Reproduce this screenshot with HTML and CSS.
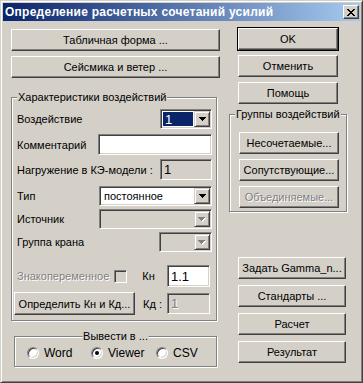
FILE: index.html
```html
<!DOCTYPE html>
<html>
<head>
<meta charset="utf-8">
<link rel="stylesheet" href="styles.css">
</head>
<body>
<div class="window">
  <div class="titlebar">
    <span class="title">Определение расчетных сочетаний усилий</span>
    <div class="close">
      <svg width="8" height="7" viewBox="0 0 8 7" shape-rendering="crispEdges">
        <path d="M0 0h2v1h-2zM6 0h2v1h-2zM1 1h2v1h-2zM5 1h2v1h-2zM2 2h4v1h-4zM3 3h2v1h-2zM2 4h4v1h-4zM1 5h2v1h-2zM5 5h2v1h-2zM0 6h2v1h-2zM6 6h2v1h-2z" fill="#000"/>
      </svg>
    </div>
  </div>
  <div class="client">
    <div class="left">
      <div class="btn wide b-table">Табличная форма ...</div>
      <div class="btn wide b-seism">Сейсмика и ветер ...</div>

      <div class="group chars">
        <span class="gtitle">Характеристики воздействий</span>
        <div class="row r1">
          <span class="lbl">Воздействие</span>
          <div class="field combo w52 h20">
            <span class="val selected">1</span>
            <span class="arrow"><svg width="7" height="4" shape-rendering="crispEdges"><path d="M0 0h7v1h-7zM1 1h5v1h-5zM2 2h3v1h-3zM3 3h1v1h-1z" fill="#000"/></svg></span>
          </div>
        </div>
        <div class="row r2">
          <span class="lbl">Комментарий</span>
          <div class="field edit w114 h21"></div>
        </div>
        <div class="row r3">
          <span class="lbl">Нагружение в КЭ-модели :</span>
          <div class="field ro w52 h21"><span class="txt">1</span></div>
        </div>
        <div class="row r4">
          <span class="lbl">Тип</span>
          <div class="field combo w113 h20">
            <span class="val">постоянное</span>
            <span class="arrow"><svg width="7" height="4" shape-rendering="crispEdges"><path d="M0 0h7v1h-7zM1 1h5v1h-5zM2 2h3v1h-3zM3 3h1v1h-1z" fill="#000"/></svg></span>
          </div>
        </div>
        <div class="row r5">
          <span class="lbl">Источник</span>
          <div class="field combo disabled w113 h20">
            <span class="val"></span>
            <span class="arrow"><svg width="8" height="5" shape-rendering="crispEdges"><path d="M1 1h7v1h-7zM2 2h5v1h-5zM3 3h3v1h-3zM4 4h1v1h-1z" fill="#fff"/><path d="M0 0h7v1h-7zM1 1h5v1h-5zM2 2h3v1h-3zM3 3h1v1h-1z" fill="#808080"/></svg></span>
          </div>
        </div>
        <div class="row r6">
          <span class="lbl">Группа крана</span>
          <div class="field combo disabled w53 h20">
            <span class="val"></span>
            <span class="arrow"><svg width="8" height="5" shape-rendering="crispEdges"><path d="M1 1h7v1h-7zM2 2h5v1h-5zM3 3h3v1h-3zM4 4h1v1h-1z" fill="#fff"/><path d="M0 0h7v1h-7zM1 1h5v1h-5zM2 2h3v1h-3zM3 3h1v1h-1z" fill="#808080"/></svg></span>
          </div>
        </div>
        <div class="row r7">
          <span class="lbl dis">Знакопеременное</span>
          <span class="check"></span>
          <span class="lbl kn">Кн</span>
          <div class="field edit w43 h22"><span class="txt">1.1</span></div>
        </div>
        <div class="row r8">
          <div class="btn b-kd">Определить Кн и Кд...</div>
          <span class="lbl kd">Кд :</span>
          <div class="field ro w43 h21"><span class="txt dis">1</span></div>
        </div>
      </div>

      <div class="group output">
        <span class="gtitle centered">Вывести в ...</span>
        <div class="radios">
          <span class="ritem w64"><span class="radio"></span><span class="rlbl">Word</span></span>
          <span class="ritem w65"><span class="radio on"></span><span class="rlbl">Viewer</span></span>
          <span class="ritem"><span class="radio"></span><span class="rlbl">CSV</span></span>
        </div>
      </div>
    </div>

    <div class="right">
      <div class="btn narrow default b-ok">OK</div>
      <div class="btn narrow b-cancel">Отменить</div>
      <div class="btn narrow b-help">Помощь</div>
      <div class="group groups">
        <span class="gtitle">Группы воздействий</span>
        <div class="btn narrow g1">Несочетаемые...</div>
        <div class="btn narrow g2">Сопутствующие...</div>
        <div class="btn narrow g3 dis">Объединяемые...</div>
      </div>
      <div class="btn broad b-gamma">Задать Gamma_n...</div>
      <div class="btn broad b-std">Стандарты ...</div>
      <div class="btn broad b-calc">Расчет</div>
      <div class="btn broad b-res">Результат</div>
    </div>
  </div>
</div>
</body>
</html>
```

FILE: styles.css
```css
* { box-sizing: border-box; }
html, body { margin: 0; padding: 0; }
body {
  width: 363px;
  height: 383px;
  overflow: hidden;
  background: #D4D0C8;
  font-family: "Liberation Sans", Arial, sans-serif;
  font-size: 11px;
  color: #000;
}
.window {
  width: 363px;
  height: 383px;
  background: #D4D0C8;
  border: 1px solid;
  border-color: #D4D0C8 #404040 #404040 #D4D0C8;
  box-shadow: inset 1px 1px 0 #fff, inset -1px -1px 0 #808080;
  padding: 2px;
  display: flex;
  flex-direction: column;
}
.titlebar {
  height: 18px;
  flex: none;
  display: flex;
  align-items: center;
  justify-content: space-between;
  padding-left: 2px;
  padding-right: 1px;
  background: linear-gradient(to right, #0A246A, #A6CAF0);
}
.title {
  color: #fff;
  font-weight: bold;
  font-size: 12px;
  letter-spacing: 0.25px;
  white-space: nowrap;
}
.close {
  width: 16px;
  height: 14px;
  background: #D4D0C8;
  border: 1px solid;
  border-color: #fff #404040 #404040 #fff;
  box-shadow: inset -1px -1px 0 #808080;
  display: flex;
  align-items: center;
  justify-content: center;
  padding-right: 1px;
}
.close svg { display: block; }

.client {
  flex: 1;
  display: flex;
}
.left {
  width: 217px;
  margin-left: 8px;
  display: flex;
  flex-direction: column;
}
.right {
  width: 119px;
  margin-left: 1px;
  display: flex;
  flex-direction: column;
}

/* buttons */
.btn {
  height: 22px;
  background: #D4D0C8;
  border: 1px solid;
  border-color: #fff #404040 #404040 #fff;
  box-shadow: inset -1px -1px 0 #808080;
  display: flex;
  align-items: center;
  justify-content: center;
  white-space: nowrap;
  flex: none;
}
.btn.dis { color: #808080; text-shadow: 1px 1px 0 #fff; }
.btn.wide { width: 209px; }
.b-table { margin-top: 8px; }
.b-seism { margin-top: 5px; }
.btn.narrow { width: 100px; margin-left: 9px; }
.btn.broad { width: 108px; margin-left: 9px; }
.btn.default { outline: 1px solid #000; }
.b-ok { margin-top: 7px; }
.b-cancel { margin-top: 5px; }
.b-help { margin-top: 5px; }
.g1 { margin-top: 17px; margin-left: 8px; }
.g2 { margin-top: 5px; margin-left: 8px; }
.g3 { margin-top: 5px; margin-left: 8px; }
.b-gamma { margin-top: 45px; }
.b-std { margin-top: 6px; }
.b-calc { margin-top: 6px; }
.b-res { margin-top: 6px; }

/* group boxes */
.group {
  position: relative;
  border: 1px solid #808080;
  box-shadow: inset 1px 1px 0 #fff, 1px 1px 0 #fff;
  flex: none;
}
.gtitle {
  position: absolute;
  top: -8px;
  left: 5px;
  padding: 0 1px;
  background: #D4D0C8;
  line-height: 14px;
  white-space: nowrap;
}
.gtitle.centered {
  left: 50%;
  transform: translateX(-50%);
}
.chars {
  margin-top: 19px;
  width: 206px;
  height: 224px;
  padding: 11px 4px 0 5px;
  display: flex;
  flex-direction: column;
}
.groups {
  margin-top: 10px;
  width: 118px;
  height: 98px;
  display: flex;
  flex-direction: column;
}
.output {
  margin-top: 15px;
  margin-left: 3px;
  width: 203px;
  height: 31px;
}

/* rows */
.row {
  display: flex;
  align-items: center;
  flex: none;
}
.lbl { white-space: nowrap; }
.lbl.dis { color: #808080; text-shadow: 1px 1px 0 #fff; }
.row .field { margin-left: auto; }
.r2 { margin-top: 5px; }
.r3 { margin-top: 4px; }
.r4 { margin-top: 6px; }
.r5 { margin-top: 3px; }
.r6 { margin-top: 3px; }
.r7 { margin-top: 13px; padding-right: 2px; }
.r8 { margin-top: 5px; padding-right: 2px; margin-left: -3px; }

/* fields */
.field {
  border: 1px solid;
  border-color: #808080 #fff #fff #808080;
  box-shadow: inset 1px 1px 0 #404040, inset -1px -1px 0 #D4D0C8;
  background: #fff;
  display: flex;
  align-items: stretch;
  padding: 2px;
  flex: none;
}
.field.ro, .field.disabled { background: #D4D0C8; }
.w52 { width: 52px; }
.w53 { width: 53px; }
.w43 { width: 43px; }
.w113 { width: 113px; }
.w114 { width: 114px; }
.h20 { height: 20px; }
.h21 { height: 21px; }
.h22 { height: 22px; }
.combo .val {
  flex: 1;
  display: flex;
  align-items: center;
  padding-left: 2px;
  white-space: nowrap;
  font-size: 11px;
}
.combo .val.selected {
  background: #0A246A;
  color: #fff;
  margin-right: 1px;
  font-size: 13px;
}
.combo .arrow {
  width: 16px;
  height: 16px;
  margin: -1px -1px 0 0;
  background: #D4D0C8;
  border: 1px solid;
  border-color: #D4D0C8 #404040 #404040 #D4D0C8;
  box-shadow: inset 1px 1px 0 #fff, inset -1px -1px 0 #808080;
  display: flex;
  align-items: center;
  justify-content: center;
  flex: none;
}
.combo .arrow svg { display: block; }
.field .txt {
  display: flex;
  align-items: center;
  padding-left: 1px;
  font-size: 13px;
}
.field .txt.dis { color: #808080; text-shadow: 1px 1px 0 #fff; }
.check {
  width: 13px;
  height: 13px;
  margin-left: 5px;
  border: 1px solid;
  border-color: #808080 #fff #fff #808080;
  box-shadow: inset 1px 1px 0 #404040, inset -1px -1px 0 #D4D0C8;
  background: #D4D0C8;
  flex: none;
}
.kn { margin-left: 15px; }
.b-kd {
  width: 121px;
  height: 23px;
}
.kd { margin-left: 8px; }

/* radios */
.radios {
  display: flex;
  align-items: center;
  height: 29px;
  padding-left: 12px;
  padding-top: 2px;
}
.ritem {
  display: flex;
  align-items: center;
  flex: none;
}
.w64 { width: 64px; }
.w65 { width: 65px; }
.radio {
  width: 12px;
  height: 12px;
  border-radius: 50%;
  border: 1px solid;
  border-color: #808080 #fff #fff #808080;
  box-shadow: inset 1px 1px 0 #404040, inset -1px -1px 0 #D4D0C8;
  background: #fff;
  flex: none;
  position: relative;
}
.radio.on::after {
  content: "";
  position: absolute;
  left: 3px;
  top: 3px;
  width: 4px;
  height: 4px;
  border-radius: 50%;
  background: #000;
}
.rlbl { margin-left: 5px; font-size: 12px; }
```
